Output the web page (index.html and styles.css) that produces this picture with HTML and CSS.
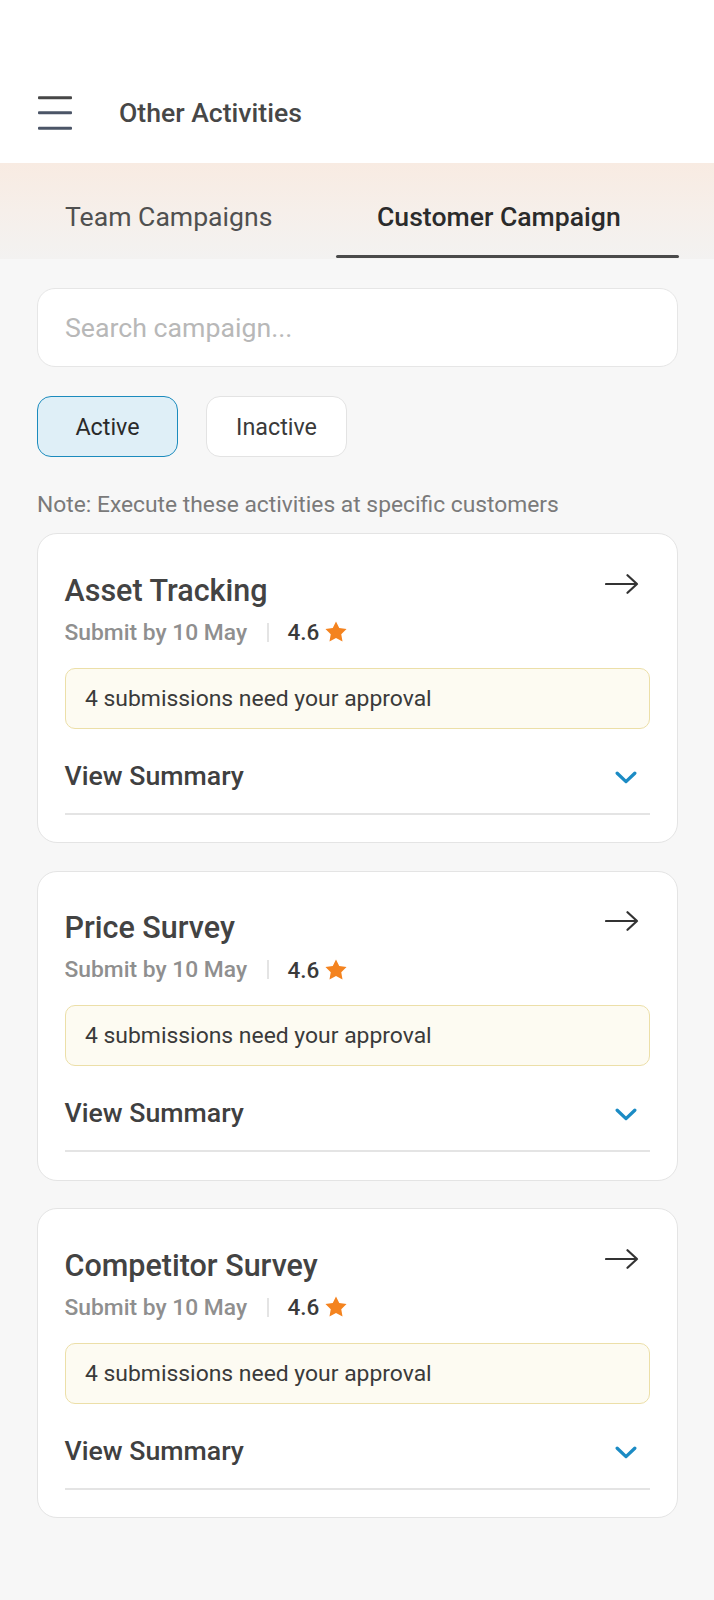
FILE: index.html
```html
<!DOCTYPE html>
<html lang="en">
<head>
<meta charset="utf-8">
<title>Other Activities</title>
<link rel="stylesheet" href="styles.css">
</head>
<body>
<header class="header">
  <svg class="menu" width="34" height="34" viewBox="0 0 34 34" aria-hidden="true">
    <rect x="0" y="0.3" width="34" height="3" rx="1" fill="#474747"/>
    <rect x="0" y="15.3" width="34" height="3" rx="1" fill="#4b5567"/>
    <rect x="0" y="30.8" width="34" height="3" rx="1" fill="#4b5567"/>
  </svg>
  <h1 class="title">Other Activities</h1>
</header>

<nav class="tabs">
  <div class="tab tab-team">Team Campaigns</div>
  <div class="tab tab-customer is-active">Customer Campaign</div>
</nav>

<main class="content">
  <div class="search">Search campaign...</div>

  <div class="chips">
    <div class="chip chip-active">Active</div>
    <div class="chip">Inactive</div>
  </div>

  <p class="note">Note: Execute these activities at specific customers</p>

  <section class="card">
    <div class="card-head">
      <h2 class="card-title">Asset Tracking</h2>
      <svg class="arrow" width="34" height="20" viewBox="0 0 34 20" aria-hidden="true"><path d="M1 10H32M22.5 1.2L32 10l-9.5 8.8" fill="none" stroke="#333" stroke-width="2.2" stroke-linecap="round" stroke-linejoin="round"/></svg>
    </div>
    <div class="meta">
      <span class="due">Submit by 10 May</span>
      <span class="sep"></span>
      <span class="rating">4.6</span>
      <svg class="star" width="24" height="24" viewBox="0 0 24 24" aria-hidden="true"><path d="M12 1.4l3.25 6.7 7.3 1-5.3 5.15 1.28 7.3L12 18.1l-6.53 3.45 1.28-7.3L1.45 9.1l7.3-1z" fill="#f4831f"/></svg>
    </div>
    <div class="approval">4 submissions need your approval</div>
    <div class="summary">
      <span>View Summary</span>
      <svg class="chev" width="22" height="13" viewBox="0 0 22 13" aria-hidden="true"><path d="M2.2 2.2L11 10.6l8.8-8.4" fill="none" stroke="#1b8bc4" stroke-width="3.3" stroke-linecap="round" stroke-linejoin="round"/></svg>
    </div>
  </section>

  <section class="card">
    <div class="card-head">
      <h2 class="card-title">Price Survey</h2>
      <svg class="arrow" width="34" height="20" viewBox="0 0 34 20" aria-hidden="true"><path d="M1 10H32M22.5 1.2L32 10l-9.5 8.8" fill="none" stroke="#333" stroke-width="2.2" stroke-linecap="round" stroke-linejoin="round"/></svg>
    </div>
    <div class="meta">
      <span class="due">Submit by 10 May</span>
      <span class="sep"></span>
      <span class="rating">4.6</span>
      <svg class="star" width="24" height="24" viewBox="0 0 24 24" aria-hidden="true"><path d="M12 1.4l3.25 6.7 7.3 1-5.3 5.15 1.28 7.3L12 18.1l-6.53 3.45 1.28-7.3L1.45 9.1l7.3-1z" fill="#f4831f"/></svg>
    </div>
    <div class="approval">4 submissions need your approval</div>
    <div class="summary">
      <span>View Summary</span>
      <svg class="chev" width="22" height="13" viewBox="0 0 22 13" aria-hidden="true"><path d="M2.2 2.2L11 10.6l8.8-8.4" fill="none" stroke="#1b8bc4" stroke-width="3.3" stroke-linecap="round" stroke-linejoin="round"/></svg>
    </div>
  </section>

  <section class="card">
    <div class="card-head">
      <h2 class="card-title">Competitor Survey</h2>
      <svg class="arrow" width="34" height="20" viewBox="0 0 34 20" aria-hidden="true"><path d="M1 10H32M22.5 1.2L32 10l-9.5 8.8" fill="none" stroke="#333" stroke-width="2.2" stroke-linecap="round" stroke-linejoin="round"/></svg>
    </div>
    <div class="meta">
      <span class="due">Submit by 10 May</span>
      <span class="sep"></span>
      <span class="rating">4.6</span>
      <svg class="star" width="24" height="24" viewBox="0 0 24 24" aria-hidden="true"><path d="M12 1.4l3.25 6.7 7.3 1-5.3 5.15 1.28 7.3L12 18.1l-6.53 3.45 1.28-7.3L1.45 9.1l7.3-1z" fill="#f4831f"/></svg>
    </div>
    <div class="approval">4 submissions need your approval</div>
    <div class="summary">
      <span>View Summary</span>
      <svg class="chev" width="22" height="13" viewBox="0 0 22 13" aria-hidden="true"><path d="M2.2 2.2L11 10.6l8.8-8.4" fill="none" stroke="#1b8bc4" stroke-width="3.3" stroke-linecap="round" stroke-linejoin="round"/></svg>
    </div>
  </section>
</main>
</body>
</html>
```

FILE: styles.css
```css
* { box-sizing: border-box; }

html, body {
  margin: 0;
  padding: 0;
}

body {
  background: #f7f7f7;
  font-family: Roboto, "Liberation Sans", Arial, sans-serif;
  color: #333;
  min-height: 1600px;
}

.header {
  height: 163px;
  background: #ffffff;
  display: flex;
  align-items: center;
  padding: 62px 0 0 38px;
}

.menu {
  display: block;
  flex: 0 0 auto;
}

.title {
  margin: 0 0 0 47px;
  font-size: 26.6px;
  font-weight: 500;
  line-height: 32px;
  color: #474747;
}

.tabs {
  height: 96px;
  display: flex;
  padding-right: 35px;
  background: linear-gradient(180deg, #f8ebe2 0%, #f6efea 50%, #f3f2f1 100%);
}

.tab {
  position: relative;
  padding-top: 38px;
  font-size: 26.6px;
  line-height: 32px;
  white-space: nowrap;
}

.tab-team {
  flex: 0 0 336px;
  padding-left: 65px;
  color: #505050;
}

.tab-customer {
  flex: 1 1 auto;
  padding-left: 41px;
  color: #2b2b2b;
  font-weight: 500;
}

.tab.is-active::after {
  content: "";
  position: absolute;
  left: 0;
  right: 0;
  bottom: 1px;
  height: 3px;
  border-radius: 2px;
  background: #4a4a4a;
}

.content {
  padding: 29px 36px 0 37px;
}

.search {
  height: 79px;
  background: #ffffff;
  border: 1.5px solid #e6e6e6;
  border-radius: 18px;
  display: flex;
  align-items: center;
  padding-left: 27px;
  font-size: 26.7px;
  color: #b8b8b8;
}

.chips {
  display: flex;
  gap: 28px;
  margin-top: 29px;
}

.chip {
  width: 141px;
  height: 61px;
  border-radius: 14px;
  border: 1.5px solid #e3e3e3;
  background: #ffffff;
  display: flex;
  align-items: center;
  justify-content: center;
  font-size: 23.3px;
  color: #3a3a3a;
}

.chip-active {
  background: #dfeff7;
  border-color: #1b8bbd;
  color: #2a2a2a;
}

.note {
  margin: 32.5px 0 13.5px;
  font-size: 22.8px;
  line-height: 30px;
  color: #7a7a7a;
}

.card {
  background: #ffffff;
  border: 1.5px solid #e4e4e4;
  border-radius: 20px;
  padding: 38.5px 27px 27.5px 26.5px;
  margin-bottom: 27.5px;
}

.card-head {
  display: flex;
  justify-content: space-between;
  align-items: flex-start;
}

.card-title {
  margin: 0;
  font-size: 30.5px;
  font-weight: 500;
  line-height: 36px;
  color: #434343;
}

.arrow {
  display: block;
  margin: 1px 11px 0 0;
}

.meta {
  display: flex;
  align-items: center;
  margin-top: 8.5px;
  height: 30px;
}

.due {
  font-size: 22.8px;
  font-weight: 500;
  color: #8f8f8f;
}

.sep {
  width: 1.5px;
  height: 19px;
  background: #e4e4e4;
  margin: 0 19px 0 20px;
}

.rating {
  font-size: 22.5px;
  font-weight: 500;
  color: #3a3a3a;
}

.star {
  display: block;
  margin-left: 5px;
}

.approval {
  margin-top: 20.5px;
  height: 61px;
  border: 1.5px solid #ecdfa8;
  background: #fdfbf2;
  border-radius: 10px;
  display: flex;
  align-items: center;
  padding-left: 19.5px;
  font-size: 22.9px;
  color: #3a3a3a;
}

.summary {
  margin-top: 30px;
  display: flex;
  justify-content: space-between;
  align-items: center;
  padding-bottom: 20px;
  border-bottom: 2px solid #e4e4e4;
  font-size: 26.7px;
  font-weight: 500;
  line-height: 34px;
  color: #404040;
}

.chev {
  display: block;
  margin: 3px 13px 0 0;
}
```
